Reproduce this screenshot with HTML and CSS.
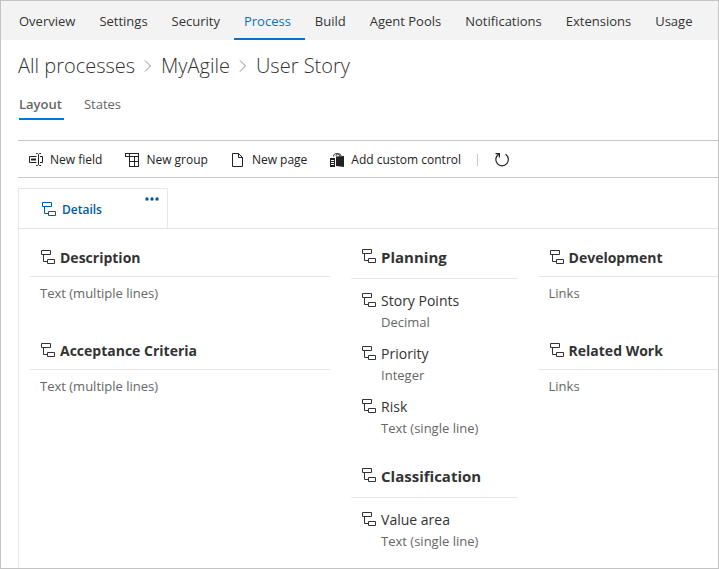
FILE: index.html
```html
<!DOCTYPE html>
<html lang="en">
<head>
<meta charset="utf-8">
<title>User Story - Process</title>
<link rel="stylesheet" href="styles.css">
</head>
<body>
<svg class="sprite" aria-hidden="true">
  <symbol id="inherited" viewBox="0 0 14 14">
    <path d="M.5.5h9v4h-9zM6.500 9.500h7v4h-7zM2.500 4.500v7h4" fill="none" stroke="currentColor"/>
  </symbol>
  <symbol id="chevron" viewBox="0 0 8 12">
    <path d="M1 .5 6.500 6 1 11.500" fill="none" stroke="currentColor"/>
  </symbol>
</svg>
<div class="app">
  <nav class="hubs" aria-label="Settings">
    <a class="hub" href="#overview">Overview</a>
    <a class="hub" href="#settings">Settings</a>
    <a class="hub" href="#security">Security</a>
    <a class="hub hub-current" href="#process" aria-current="page">Process</a>
    <a class="hub" href="#build">Build</a>
    <a class="hub" href="#pools">Agent Pools</a>
    <a class="hub" href="#notifications">Notifications</a>
    <a class="hub" href="#extensions">Extensions</a>
    <a class="hub" href="#usage">Usage</a>
  </nav>
  <main class="content">
    <nav class="crumbs" aria-label="Breadcrumb">
      <a href="#all">All processes</a>
      <svg class="chevron"><use href="#chevron"/></svg>
      <a href="#myagile">MyAgile</a>
      <svg class="chevron"><use href="#chevron"/></svg>
      <a href="#story">User Story</a>
    </nav>
    <nav class="pivots" aria-label="Views">
      <a class="pivot pivot-current" href="#layout">Layout</a>
      <a class="pivot" href="#states">States</a>
    </nav>
    <div class="toolbar">
      <button class="tool" type="button">
        <svg class="tool-icon" viewBox="0 0 16 14"><path d="M8.500 3.500H1.500v6h7M12 3.500h2.500v6H12" fill="none" stroke="currentColor"/><path d="M3 6.500h5" stroke="currentColor" stroke-width="2"/><path d="M8 .5h1.500l1 1 1-1H13M10.500 1.500v10M8 12.500h1.500l1-1 1 1H13" fill="none" stroke="currentColor"/></svg>New field</button>
      <button class="tool" type="button">
        <svg class="tool-icon" viewBox="0 0 16 14"><path d="M1 .5h14M1.500 0v4M5.500 1v12.500M1 3.500h14M5 8.500h10M5 13.500h10M10.500 4v9.500M14.500 0v14" fill="none" stroke="currentColor"/></svg>New group</button>
      <button class="tool" type="button">
        <svg class="tool-icon" viewBox="0 0 16 14"><path d="M2.500.5h6l4 4v9h-10zM8.500.5v4h4" fill="none" stroke="currentColor"/></svg>New page</button>
      <button class="tool" type="button">
        <svg class="tool-icon" viewBox="0 0 16 14"><path d="M4.500 3.500c0-4 6-4 6 0M7 3c0-3 5-3 5 0" fill="none" stroke="currentColor"/><path d="M7 3.500 15 3v11l-8-1zM1 5h5v9H1z" fill="currentColor"/><path d="M2 7.500h3M2 9.500h3M2 11.500h3" stroke="#fff"/></svg>Add custom control</button>
      <span class="divider"></span>
      <button class="tool" type="button" aria-label="Refresh">
        <svg class="tool-icon" viewBox="0 0 16 14"><path d="M4.700 1.300a6.300 6.300 0 1 0 6.800 0M1.500.6H5.400V4.500" fill="none" stroke="currentColor" stroke-width="1.200"/></svg></button>
    </div>
    <div class="tabs">
      <div class="tab">
        <a class="tab-link" href="#details"><svg class="node"><use href="#inherited"/></svg>Details</a>
        <button class="more" type="button" aria-label="More actions"><svg viewBox="0 0 14 4"><circle cx="2" cy="2" r="1.700"/><circle cx="7" cy="2" r="1.700"/><circle cx="12" cy="2" r="1.700"/></svg></button>
      </div>
    </div>
    <div class="page">
      <div class="column column-wide">
        <section class="group">
          <h2><svg class="node"><use href="#inherited"/></svg>Description</h2>
          <p>Text (multiple lines)</p>
        </section>
        <section class="group">
          <h2><svg class="node"><use href="#inherited"/></svg>Acceptance Criteria</h2>
          <p>Text (multiple lines)</p>
        </section>
      </div>
      <div class="column column-fields">
        <section class="field-group">
          <h2><svg class="node"><use href="#inherited"/></svg>Planning</h2>
          <div class="field">
            <h3><svg class="node"><use href="#inherited"/></svg>Story Points</h3>
            <p>Decimal</p>
          </div>
          <div class="field">
            <h3><svg class="node"><use href="#inherited"/></svg>Priority</h3>
            <p>Integer</p>
          </div>
          <div class="field">
            <h3><svg class="node"><use href="#inherited"/></svg>Risk</h3>
            <p>Text (single line)</p>
          </div>
        </section>
        <section class="field-group">
          <h2><svg class="node"><use href="#inherited"/></svg>Classification</h2>
          <div class="field">
            <h3><svg class="node"><use href="#inherited"/></svg>Value area</h3>
            <p>Text (single line)</p>
          </div>
        </section>
      </div>
      <div class="column column-links">
        <section class="group">
          <h2><svg class="node"><use href="#inherited"/></svg>Development</h2>
          <p>Links</p>
        </section>
        <section class="group">
          <h2><svg class="node"><use href="#inherited"/></svg>Related Work</h2>
          <p>Links</p>
        </section>
      </div>
    </div>
  </main>
</div>
</body>
</html>
```
FILE: styles.css
```css
* {
  box-sizing: border-box;
}

body,
h2,
h3,
p {
  margin: 0;
}

body {
  background: #fff;
  color: #333;
  font-family: "Open Sans", "Noto Sans", sans-serif;
  font-size: 13px;
  line-height: 20px;
}

a {
  color: inherit;
  text-decoration: none;
}

button {
  padding: 0;
  border: 0;
  background: none;
  color: inherit;
  font: inherit;
}

.sprite {
  position: absolute;
  width: 0;
  height: 0;
}

.app {
  display: flex;
  flex-direction: column;
  min-height: 100vh;
  border: 1px solid #c3c3c3;
}

.hubs {
  display: flex;
  height: 39px;
  padding-left: 8px;
  background: #f3f3f3;
}

.hub {
  padding: 10px 14px 0 10px;
  border-bottom: 2px solid transparent;
  white-space: nowrap;
}

.hub-current {
  border-color: #106ebe;
  color: #106ebe;
}

.content {
  display: flex;
  flex: 1;
  flex-direction: column;
  padding-left: 17px;
}

.crumbs {
  display: flex;
  align-items: center;
  gap: 9px;
  margin-top: 10px;
  font-size: 20px;
  font-weight: 300;
  line-height: 32px;
}

.chevron {
  width: 8px;
  height: 12px;
  color: #888;
}

.pivots {
  display: flex;
  gap: 20px;
  margin-top: 12px;
  padding-left: 1px;
  color: #666;
}

.pivot {
  height: 26px;
  border-bottom: 2px solid transparent;
}

.pivot-current {
  padding-right: 2px;
  border-color: #0078d4;
  font-weight: 600;
}

.toolbar {
  display: flex;
  align-items: center;
  gap: 22px;
  height: 38px;
  margin-top: 20px;
  padding: 1px 0 0 10px;
  border-top: 1px solid #c8c8c8;
  border-bottom: 1px solid #c8c8c8;
  color: #222;
  font-size: 12px;
}

.tool {
  display: flex;
  align-items: center;
  gap: 6px;
  white-space: nowrap;
}

.tool-icon {
  width: 16px;
  height: 14px;
  overflow: visible;
}

.divider {
  width: 1px;
  height: 12px;
  margin: 0 -6px;
  background: #c8c8c8;
}

.tabs {
  display: flex;
  margin-top: 10px;
}

.tab {
  display: flex;
  position: relative;
  width: 150px;
  height: 40px;
  padding: 11px 0 0 23px;
  border: 1px solid #e6e6e6;
  border-bottom: 0;
  color: #005a9e;
}

.tab-link {
  display: flex;
  gap: 6px;
  font-size: 12px;
  font-weight: 600;
}

.node {
  flex: none;
  width: 14px;
  height: 14px;
  margin-top: 2px;
}

.more {
  position: absolute;
  top: 8px;
  right: 8px;
  width: 14px;
  height: 4px;
}

.more svg {
  display: block;
  fill: currentColor;
}

.page {
  display: grid;
  flex: 1;
  grid-template-columns: 301fr 167fr 180fr;
  gap: 21px;
  padding: 18px 0 14px 11px;
  border-top: 1px solid #e6e6e6;
  border-left: 1px solid #e6e6e6;
}

.column {
  display: flex;
  flex-direction: column;
}

.column-wide,
.column-links {
  gap: 38px;
  padding-top: 1px;
}

.column-fields {
  gap: 28px;
}

h2,
h3 {
  display: flex;
  gap: 5px;
  padding-left: 11px;
  font-size: 14px;
  font-weight: 400;
}

h2 {
  border-bottom: 1px solid #e6e6e6;
  font-weight: 700;
}

p {
  color: #666;
}

.group h2 {
  height: 29px;
}

.group p {
  padding: 6px 0 0 10px;
}

.field-group {
  display: flex;
  flex-direction: column;
  gap: 12px;
}

.field-group h2 {
  height: 32px;
  font-size: 15px;
}

.field p {
  padding: 1px 0 0 30px;
}
```
